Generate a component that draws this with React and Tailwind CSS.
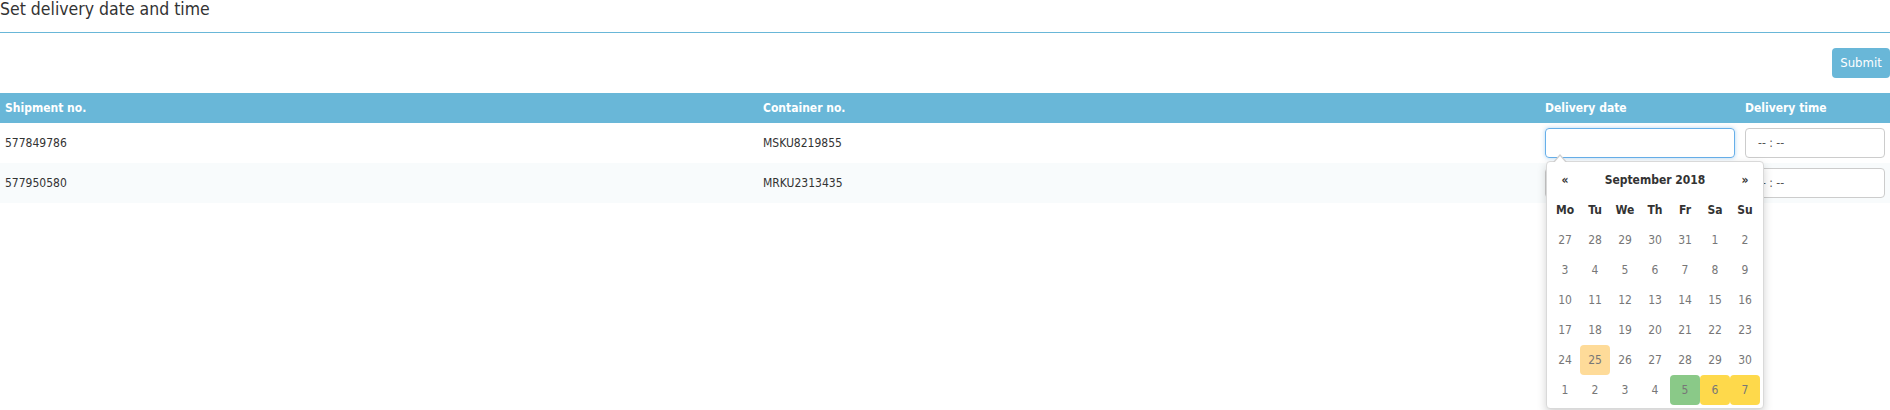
import React from 'react';

const rows = [
  { shipment: '577849786', container: 'MSKU8219855' },
  { shipment: '577950580', container: 'MRKU2313435' },
];

const weeks = [
  [27, 28, 29, 30, 31, 1, 2],
  [3, 4, 5, 6, 7, 8, 9],
  [10, 11, 12, 13, 14, 15, 16],
  [17, 18, 19, 20, 21, 22, 23],
  [24, 25, 26, 27, 28, 29, 30],
  [1, 2, 3, 4, 5, 6, 7],
];

const dayStyle = (w, d) => {
  if (w === 4 && d === 25) return 'bg-[#fedb99]';
  if (w === 5 && d === 5) return 'bg-[#8ac988]';
  if (w === 5 && (d === 6 || d === 7)) return 'bg-[#fed94b]';
  return '';
};

const DatePicker = () => (
  <div className="absolute left-[6px] top-[33px] z-10 bg-white border border-[#d9d9d9] rounded-[4px] p-[3px] shadow-[0_4px_10px_rgba(0,0,0,0.18)]">
    {/* caret */}
    <div className="absolute left-[6px] -top-[8px] w-0 h-0 border-x-[7px] border-x-transparent border-b-[8px] border-b-[#d0d0d0]" />
    <div className="absolute left-[7px] -top-[6px] w-0 h-0 border-x-[6px] border-x-transparent border-b-[7px] border-b-white" />
    <div className="grid grid-cols-[30px_150px_30px] h-[30px] items-center text-center font-bold text-[#333]">
      <span>«</span>
      <span>September 2018</span>
      <span>»</span>
    </div>
    <div className="grid grid-cols-[repeat(7,30px)]">
      {['Mo', 'Tu', 'We', 'Th', 'Fr', 'Sa', 'Su'].map((d) => (
        <div key={d} className="h-[30px] flex items-center justify-center font-bold text-[#333]">
          {d}
        </div>
      ))}
      {weeks.map((week, w) =>
        week.map((d, i) => (
          <div
            key={w + '-' + i}
            className={`h-[30px] flex items-center justify-center rounded-[4px] text-[#777] ${dayStyle(w, d)}`}
          >
            {d}
          </div>
        ))
      )}
    </div>
  </div>
);

export default function App() {
  return (
    <div className="w-[1890px] h-[410px] bg-white text-[#333] text-[12px] font-['DejaVu_Sans_Condensed','DejaVu_Sans',sans-serif]">
      <div className="h-[33px] border-b border-[#69b7d8]">
        <h3 className="text-[17.5px] leading-[18px] font-normal">Set delivery date and time</h3>
      </div>

      <div className="flex justify-end pt-[15px]">
        <button className="w-[58px] h-[30px] rounded-[4px] bg-[#69b7d8] text-white text-[13px]">
          Submit
        </button>
      </div>

      <div className="pt-[15px]">
        <div className="grid grid-cols-[758px_782px_200px_1fr] h-[30px] items-center bg-[#69b7d8] text-white font-bold">
          <div className="pl-[5px]">Shipment no.</div>
          <div className="pl-[5px]">Container no.</div>
          <div className="pl-[5px]">Delivery date</div>
          <div className="pl-[5px]">Delivery time</div>
        </div>
        {rows.map((r, idx) => (
          <div
            key={r.shipment}
            className={`grid grid-cols-[758px_782px_200px_1fr] h-[40px] items-center ${idx % 2 ? 'bg-[#f8fbfc]' : 'bg-white'}`}
          >
            <div className="pl-[5px]">{r.shipment}</div>
            <div className="pl-[5px]">{r.container}</div>
            <div className="pl-[5px] relative">
              <input
                type="text"
                className={`block w-[190px] h-[30px] rounded-[4px] border px-[12px] outline-none ${idx === 0 ? 'border-[#66afe9] shadow-[0_0_4px_rgba(102,175,233,0.5)]' : 'border-[#ccc]'}`}
              />
              {idx === 0 && <DatePicker />}
            </div>
            <div className="pl-[5px]">
              <div className="w-[140px] h-[30px] rounded-[4px] border border-[#ccc] bg-white px-[12px] flex items-center text-[#555]">
                -- : --
              </div>
            </div>
          </div>
        ))}
      </div>
    </div>
  );
}
